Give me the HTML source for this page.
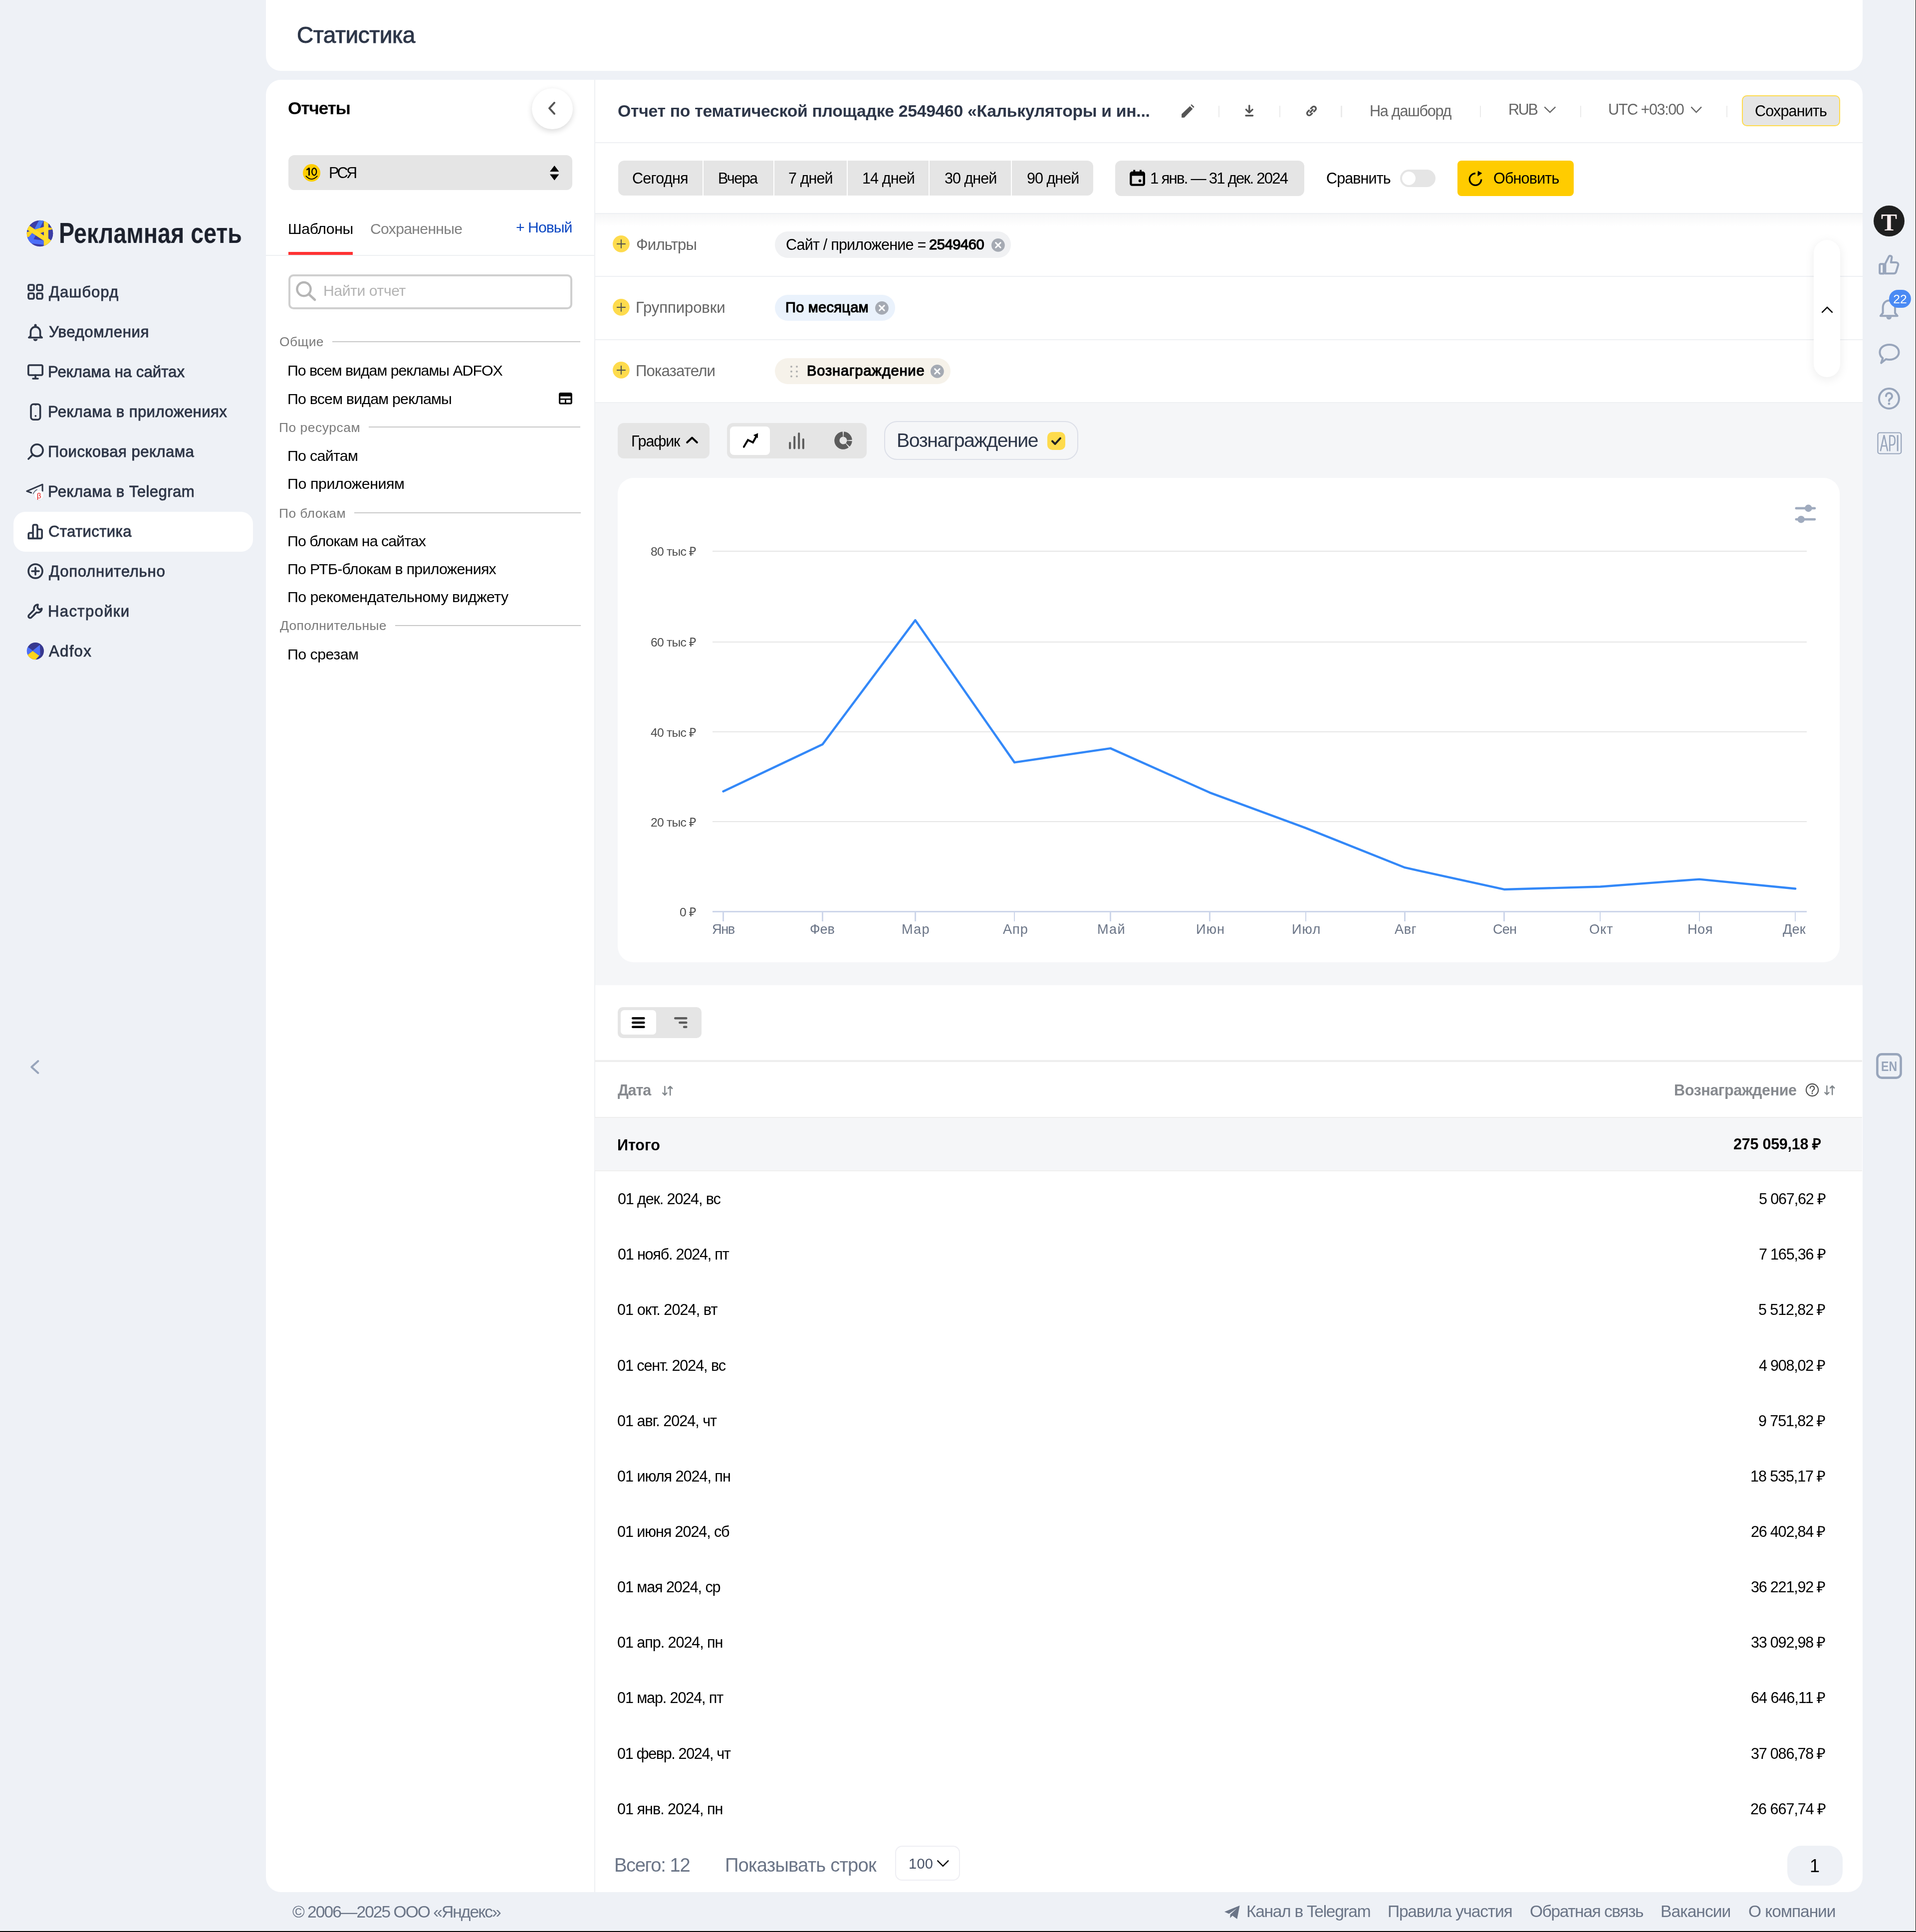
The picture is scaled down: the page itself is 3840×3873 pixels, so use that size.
<!DOCTYPE html><html lang="ru"><head><meta charset="utf-8"><title>Статистика</title><style>
html{zoom:2}
@media (max-width:2500px){html{zoom:1}}
*{margin:0;padding:0;box-sizing:border-box}
html,body{width:1920px;height:1936.5px;overflow:hidden;background:#eef1f6}
body{position:relative;font-family:"Liberation Sans",sans-serif}
.t{position:absolute;line-height:1;white-space:nowrap;will-change:transform}
.b{position:absolute}
svg.b{overflow:visible;will-change:transform}
</style></head><body>
<svg class="b" style="left:24.00px;top:218.00px;" width="32" height="32" viewBox="0 0 1916 1916"><defs><clipPath id="lc"><circle cx="957" cy="957" r="787"/></clipPath></defs>
<g clip-path="url(#lc)"><rect width="1916" height="1916" fill="#3b3da6"/>
<path d="M930 120 L1220 120 L850 840 L630 690Z" fill="#4a7cf6"/>
<path d="M490 930 L700 1080 L580 1300 L1190 1380 L1190 1640 L440 1560 L150 1250Z" fill="#4c6ff8"/>
<path d="M60 880 L330 820 L1190 560 L1800 640 L1800 750 L1465 760 L1190 870 L990 950 L490 930 L300 1160 L60 1200Z" fill="#ffd21c"/>
<path d="M60 304 L1800 1483 L1800 1789 L60 650Z" fill="#ffdc2a"/>
<path d="M1190 0 L1465 0 L1465 1916 L1190 1916Z" fill="#ffdd30"/>
<path d="M1465 760 L1800 690 L1800 1200 L1640 1375 L1465 1250Z" fill="#3b3da6"/>
<path d="M990 945 L1190 870 L1190 1075Z" fill="#3b3da6"/>
<path d="M1465 330 L1570 440 L1465 480Z" fill="#3b3da6"/>
<path d="M150 720 L330 820 L150 890Z" fill="#3b3da6"/>
</g></svg>
<div class="t" id="logo" style="left:58.98px;top:219.69px;font-size:28.60px;font-weight:700;color:#1c212d;transform:scaleX(0.8153);transform-origin:0 0;">Рекламная сеть</div>
<div class="b" style="left:13.40px;top:512.95px;width:240.00px;height:39.90px;background:#fff;border-radius:12px"></div>
<div class="t" id="nav0" style="left:49.00px;top:285.04px;font-size:15.60px;color:#2e3647;letter-spacing:0.465px;-webkit-text-stroke:0.4px #2e3647">Дашборд</div>
<div class="t" id="nav1" style="left:48.90px;top:325.04px;font-size:15.60px;color:#2e3647;letter-spacing:0.265px;-webkit-text-stroke:0.4px #2e3647">Уведомления</div>
<div class="t" id="nav2" style="left:47.90px;top:365.04px;font-size:15.60px;color:#2e3647;letter-spacing:-0.007px;-webkit-text-stroke:0.4px #2e3647">Реклама на сайтах</div>
<div class="t" id="nav3" style="left:47.90px;top:405.04px;font-size:15.60px;color:#2e3647;letter-spacing:0.182px;-webkit-text-stroke:0.4px #2e3647">Реклама в приложениях</div>
<div class="t" id="nav4" style="left:47.90px;top:445.04px;font-size:15.60px;color:#2e3647;letter-spacing:0.209px;-webkit-text-stroke:0.4px #2e3647">Поисковая реклама</div>
<div class="t" id="nav5" style="left:47.90px;top:485.04px;font-size:15.60px;color:#2e3647;letter-spacing:0.189px;-webkit-text-stroke:0.4px #2e3647">Реклама в Telegram</div>
<div class="t" id="nav6" style="left:48.40px;top:525.04px;font-size:15.60px;color:#2e3647;letter-spacing:0.153px;-webkit-text-stroke:0.4px #2e3647">Статистика</div>
<div class="t" id="nav7" style="left:48.90px;top:565.04px;font-size:15.60px;color:#2e3647;letter-spacing:0.345px;-webkit-text-stroke:0.4px #2e3647">Дополнительно</div>
<div class="t" id="nav8" style="left:47.90px;top:605.04px;font-size:15.60px;color:#2e3647;letter-spacing:0.644px;-webkit-text-stroke:0.4px #2e3647">Настройки</div>
<div class="t" id="nav9" style="left:48.90px;top:645.04px;font-size:15.60px;color:#2e3647;letter-spacing:0.630px;-webkit-text-stroke:0.4px #2e3647">Adfox</div>
<svg class="b" style="left:27.50px;top:284.35px;" width="16" height="16" viewBox="0 0 16 16"><g fill="none" stroke="#2e3647" stroke-width="1.8" stroke-linecap="round" stroke-linejoin="round"><rect x="1" y="1" width="5.5" height="5.5" rx="1.2"/><rect x="9.5" y="1" width="5.5" height="5.5" rx="1.2"/><rect x="1" y="9.5" width="5.5" height="5.5" rx="1.2"/><rect x="9.5" y="9.5" width="5.5" height="5.5" rx="1.2"/></g></svg>
<svg class="b" style="left:27.50px;top:324.35px;" width="16" height="16" viewBox="0 0 16 16"><g fill="none" stroke="#2e3647" stroke-width="1.8" stroke-linecap="round" stroke-linejoin="round"><path d="M3.2 12.3 V8.2 C3.2 5.2 5.3 3.2 8 3.2 C10.7 3.2 12.8 5.2 12.8 8.2 V12.3 L14.6 13.9 H1.4 Z"/></g><path d="M5.8 15.2 a2.2 2.2 0 0 0 4.4 0Z" fill="#2e3647"/><circle cx="8" cy="1.6" r="1.3" fill="#2e3647"/></svg>
<svg class="b" style="left:27.50px;top:364.35px;" width="16" height="16" viewBox="0 0 16 16"><g fill="none" stroke="#2e3647" stroke-width="1.8" stroke-linecap="round" stroke-linejoin="round"><rect x="0.9" y="1.5" width="14.2" height="10" rx="1.2"/><path d="M5.5 15 H10.5 M8 11.5 V15"/></g></svg>
<svg class="b" style="left:27.50px;top:404.35px;" width="16" height="16" viewBox="0 0 16 16"><g fill="none" stroke="#2e3647" stroke-width="1.8" stroke-linecap="round" stroke-linejoin="round"><rect x="3.5" y="0.6" width="9.3" height="15.5" rx="2.6"/></g><circle cx="8.15" cy="12.4" r="0.95" fill="#2e3647"/><path d="M6.6 1.2 Q8.15 2.6 9.7 1.2" fill="#2e3647"/></svg>
<svg class="b" style="left:27.50px;top:444.35px;" width="16" height="16" viewBox="0 0 16 16"><g fill="none" stroke="#2e3647" stroke-width="1.8" stroke-linecap="round" stroke-linejoin="round" stroke-width="2.2"><circle cx="9.6" cy="6.85" r="5.95"/><path d="M5.3 11.2 L1.0 15.5"/></g></svg>
<svg class="b" style="left:23.00px;top:478.00px;" width="25" height="25" viewBox="0 0 25 25"><path d="M8.35 15.9 L3.9 14.3 L19.57 7.6 L19.57 14.1" fill="none" stroke="#2e3647" stroke-width="1.5" stroke-linecap="round" stroke-linejoin="round"/><path d="M10.2 17.1 Q11.5 14 14.35 12.66" fill="none" stroke="#2e3647" stroke-width="0.6"/><circle cx="16.05" cy="18.27" r="4.9" fill="#fff" stroke="#dfe5ee" stroke-width="0.5"/><text x="16.1" y="21.3" font-size="7.6" text-anchor="middle" font-family="Liberation Sans" fill="#e01010">β</text></svg>
<svg class="b" style="left:27.50px;top:524.35px;" width="16" height="16" viewBox="0 0 16 16"><g fill="none" stroke="#2e3647" stroke-width="1.8" stroke-linecap="round" stroke-linejoin="round" stroke-width="1.85"><path d="M1.1 15.2 V10.8 a1.2 1.2 0 0 1 1.2 -1.2 H5.55 V2.7 a1.2 1.2 0 0 1 1.2 -1.2 H8.76 a1.2 1.2 0 0 1 1.2 1.2 V6.1 H13.35 a1.2 1.2 0 0 1 1.2 1.2 V14.0 a1.2 1.2 0 0 1 -1.2 1.2 Z M5.55 9.6 V15.2 M9.96 6.1 V15.2"/></g></svg>
<svg class="b" style="left:27.50px;top:564.35px;" width="16" height="16" viewBox="0 0 16 16"><g fill="none" stroke="#2e3647" stroke-width="1.8" stroke-linecap="round" stroke-linejoin="round" stroke-width="2"><circle cx="8" cy="8" r="7"/><path d="M8 4.5 V11.5 M4.5 8 H11.5"/></g></svg>
<svg class="b" style="left:27.50px;top:604.35px;" width="16" height="16" viewBox="0 0 16 16"><g fill="none" stroke="#2e3647" stroke-width="1.8" stroke-linecap="round" stroke-linejoin="round" stroke-width="2"><path d="M10.5 1.5 a4 4 0 0 0 -3.8 5.2 L1.5 12 a1.6 1.6 0 0 0 2.4 2.4 L9.2 9.3 a4 4 0 0 0 5.2 -3.8 l-2.4 1.1 -2-2 Z"/></g></svg>
<svg class="b" style="left:23.00px;top:638.00px;" width="25" height="25" viewBox="0 0 1916 1916"><defs><clipPath id="ac"><circle cx="955" cy="1115" r="655"/></clipPath></defs><g clip-path="url(#ac)"><rect width="1916" height="1916" fill="#37388f"/><path d="M380 800 L750 1080 L1300 640 L1330 1440 L1220 1460 L750 1110 L340 1430 L200 1000Z" fill="#4d70fa"/><path d="M750 1110 L1220 1460 L1270 1460 L950 1800 L200 1800 L200 1500 L340 1430Z" fill="#ffd51c"/></g></svg>
<svg class="b" style="left:30.00px;top:1062.00px;" width="10" height="15" viewBox="0 0 10 15"><path d="M8.2 1.5 L1.6 7.5 L8.2 13.5" fill="none" stroke="#98a5bb" stroke-width="2" stroke-linecap="round" stroke-linejoin="round"/></svg>
<div class="b" style="left:266.35px;top:0.00px;width:1600.15px;height:71.05px;background:#fff;border-radius:0 0 15px 15px"></div>
<div class="t" id="hdr" style="left:297.35px;top:23.63px;font-size:23.00px;color:#2d3648;letter-spacing:-0.239px;-webkit-text-stroke:0.5px #2d3648">Статистика</div>
<div class="b" style="left:266.35px;top:80.00px;width:1600.15px;height:1816.60px;background:#fff;border-radius:15px"></div>
<div class="b" style="left:595.50px;top:80.00px;width:1.00px;height:1816.60px;background:#eef0f3"></div>
<div class="t" id="otch" style="left:288.70px;top:100.18px;font-size:17.80px;font-weight:700;color:#000;letter-spacing:-0.690px;">Отчеты</div>
<div class="b" style="left:533.00px;top:88.30px;width:41.00px;height:41.00px;background:#fff;border-radius:50%;box-shadow:0 2px 6px rgba(0,0,0,0.15)"></div>
<svg class="b" style="left:548.50px;top:101.50px;" width="9" height="14" viewBox="0 0 9 14"><path d="M7 1.5 L2 7 L7 12.5" fill="none" stroke="#555" stroke-width="2" stroke-linecap="round" stroke-linejoin="round"/></svg>
<div class="b" style="left:289.20px;top:155.50px;width:284.20px;height:35.20px;background:#e5e5e5;border-radius:6px"></div>
<svg class="b" style="left:303.45px;top:164.45px;" width="17.55" height="17.55" viewBox="0 0 17.55 17.55"><circle cx="8.77" cy="8.77" r="8.77" fill="#ffcc00"/><path d="M6.25 3.75 V11.45" stroke="#000" stroke-width="1.45"/><path d="M3.7 5.9 L6.4 3.9" stroke="#000" stroke-width="1.2"/><ellipse cx="11.35" cy="7.6" rx="2.25" ry="3.55" fill="none" stroke="#000" stroke-width="1.15"/><path d="M3.2 12.1 Q8.75 18 14.35 12.1" fill="none" stroke="#000" stroke-width="0.95" stroke-linecap="round"/></svg>
<div class="t" id="rsya" style="left:329.50px;top:165.55px;font-size:15.30px;color:#000;letter-spacing:-1.789px;">РСЯ</div>
<svg class="b" style="left:550.80px;top:166.00px;" width="9.2" height="14.7" viewBox="0 0 9.2 14.7"><path d="M4.6 0 L9.2 6 H0Z M4.6 14.7 L9.2 8.7 H0Z" fill="#000"/></svg>
<div class="t" id="tab1" style="left:288.30px;top:222.22px;font-size:15.10px;color:#000;letter-spacing:-0.200px;">Шаблоны</div>
<div class="t" id="tab2" style="left:370.75px;top:222.22px;font-size:15.10px;color:#808080;letter-spacing:-0.356px;">Сохраненные</div>
<div class="t" id="tab3" style="left:517.00px;top:220.72px;font-size:15.10px;color:#0a47c2;letter-spacing:-0.478px;">+ Новый</div>
<div class="b" style="left:266.35px;top:255.60px;width:329.15px;height:1.00px;background:#eef0f3"></div>
<div class="b" style="left:289.00px;top:252.30px;width:64.50px;height:3.00px;background:#f33"></div>
<div class="b" style="left:289.00px;top:274.75px;width:284.50px;height:35.15px;border:2px solid #cfcfcf;border-radius:5px;background:#fff"></div>
<svg class="b" style="left:295.80px;top:281.50px;" width="21" height="20" viewBox="0 0 21 20"><circle cx="8.5" cy="8.3" r="6.8" fill="none" stroke="#b5b5b5" stroke-width="2.2"/><path d="M13.3 13.3 L19.5 19" stroke="#b5b5b5" stroke-width="2.4" stroke-linecap="round"/></svg>
<div class="t" id="srch" style="left:323.75px;top:284.22px;font-size:15.10px;color:#b3b3b3;letter-spacing:-0.225px;">Найти отчет</div>
<div class="t" id="sec0" style="left:279.85px;top:335.83px;font-size:13.20px;color:#7a7a7a;letter-spacing:0.213px;">Общие</div>
<div class="b" style="left:333.20px;top:342.00px;width:248.55px;height:1.00px;background:#c8c8c8"></div>
<div class="t" id="sec1" style="left:279.30px;top:421.83px;font-size:13.20px;color:#7a7a7a;letter-spacing:0.271px;">По ресурсам</div>
<div class="b" style="left:369.70px;top:427.50px;width:212.05px;height:1.00px;background:#c8c8c8"></div>
<div class="t" id="sec2" style="left:279.30px;top:507.83px;font-size:13.20px;color:#7a7a7a;letter-spacing:0.207px;">По блокам</div>
<div class="b" style="left:355.00px;top:513.50px;width:226.75px;height:1.00px;background:#c8c8c8"></div>
<div class="t" id="sec3" style="left:280.30px;top:620.33px;font-size:13.20px;color:#7a7a7a;letter-spacing:0.172px;">Дополнительные</div>
<div class="b" style="left:396.00px;top:626.50px;width:185.75px;height:1.00px;background:#c8c8c8"></div>
<div class="t" id="itm0" style="left:288.20px;top:363.63px;font-size:15.20px;color:#000;letter-spacing:-0.531px;">По всем видам рекламы ADFOX</div>
<div class="t" id="itm1" style="left:288.20px;top:391.88px;font-size:15.20px;color:#000;letter-spacing:-0.410px;">По всем видам рекламы</div>
<div class="t" id="itm2" style="left:288.20px;top:449.13px;font-size:15.20px;color:#000;letter-spacing:-0.365px;">По сайтам</div>
<div class="t" id="itm3" style="left:288.20px;top:477.13px;font-size:15.20px;color:#000;letter-spacing:-0.212px;">По приложениям</div>
<div class="t" id="itm4" style="left:288.20px;top:534.43px;font-size:15.20px;color:#000;letter-spacing:-0.480px;">По блокам на сайтах</div>
<div class="t" id="itm5" style="left:288.20px;top:562.38px;font-size:15.20px;color:#000;letter-spacing:-0.372px;">По РТБ-блокам в приложениях</div>
<div class="t" id="itm6" style="left:288.20px;top:590.63px;font-size:15.20px;color:#000;letter-spacing:-0.278px;">По рекомендательному виджету</div>
<div class="t" id="itm7" style="left:288.20px;top:648.13px;font-size:15.20px;color:#000;letter-spacing:-0.272px;">По срезам</div>
<svg class="b" style="left:560.00px;top:393.50px;" width="13.4" height="11.7" viewBox="0 0 13.4 11.7"><rect x="0.8" y="0.8" width="11.8" height="10.1" rx="1" fill="none" stroke="#000" stroke-width="1.6"/><rect x="0.8" y="0.8" width="11.8" height="3" fill="#000"/><path d="M0.8 6.6 H12.6 M6.7 6.6 V10.9" stroke="#000" stroke-width="1.4"/></svg>
<div class="t" id="title" style="left:618.80px;top:102.99px;font-size:16.90px;font-weight:700;color:#2d3648;letter-spacing:-0.168px;">Отчет по тематической площадке 2549460 «Калькуляторы и ин...</div>
<div class="b" style="left:596.50px;top:142.50px;width:1270.00px;height:1.00px;background:#eef0f3"></div>
<svg class="b" style="left:1183.00px;top:103.00px;" width="15" height="16" viewBox="0 0 15 16"><path d="M1.06 11.42 L9.4 3.33 L12.23 6.16 L3.73 14.9 L1.06 14.9Z" fill="#555"/><path d="M11.0 1.55 L13.84 4.14 L12.87 5.1 L10.2 2.36Z" fill="#555"/></svg>
<div class="b" style="left:1220.85px;top:105.90px;width:1.10px;height:11.40px;background:#ebebeb"></div>
<div class="b" style="left:1282.05px;top:105.90px;width:1.10px;height:11.40px;background:#ebebeb"></div>
<div class="b" style="left:1343.70px;top:105.90px;width:1.10px;height:11.40px;background:#ebebeb"></div>
<div class="b" style="left:1483.15px;top:105.90px;width:1.10px;height:11.40px;background:#ebebeb"></div>
<div class="b" style="left:1583.45px;top:105.90px;width:1.10px;height:11.40px;background:#ebebeb"></div>
<div class="b" style="left:1729.95px;top:105.90px;width:1.10px;height:11.40px;background:#ebebeb"></div>
<svg class="b" style="left:1246.00px;top:104.00px;" width="12" height="14" viewBox="0 0 12 14"><path d="M5.9 1.9 V8.6 M2.7 5.8 L5.9 8.9 L9.1 5.8 M2.5 11.9 H9.3" fill="none" stroke="#555" stroke-width="1.7" stroke-linecap="round" stroke-linejoin="round"/></svg>
<svg class="b" style="left:1307.00px;top:104.00px;" width="14.5" height="14.4" viewBox="0 0 14.5 14.4"><g fill="none" stroke="#555" stroke-width="1.35" stroke-linecap="round" transform="rotate(-45 7.25 7.2) translate(7.25 7.2) scale(1.25) translate(-7.25 -7.2)"><path d="M6.2 5.5 H4.6 a1.7 1.7 0 0 0 0 3.4 H6.2"/><path d="M8.3 5.5 H9.9 a1.7 1.7 0 0 1 0 3.4 H8.3"/><path d="M5.8 7.2 H8.7"/></g></svg>
<div class="t" id="dash" style="left:1372.50px;top:103.55px;font-size:15.30px;color:#666;letter-spacing:-0.632px;">На дашборд</div>
<div class="t" id="rub" style="left:1511.60px;top:102.05px;font-size:15.30px;color:#666;letter-spacing:-1.197px;">RUB</div>
<svg class="b" style="left:1547.20px;top:106.50px;" width="12.4" height="7" viewBox="0 0 12.4 7"><path d="M0.7 0.7 L6.2 6 L11.7 0.7" fill="none" stroke="#666" stroke-width="1.2"/></svg>
<div class="t" id="utc" style="left:1611.50px;top:102.05px;font-size:15.30px;color:#666;letter-spacing:-0.721px;">UTC +03:00</div>
<svg class="b" style="left:1693.75px;top:106.50px;" width="11.65" height="7" viewBox="0 0 11.65 7"><path d="M0.7 0.7 L5.8 6 L11 0.7" fill="none" stroke="#666" stroke-width="1.2"/></svg>
<div class="b" style="left:1745.60px;top:95.60px;width:98.50px;height:31.00px;background:#e5e5e5;border:1px solid #ffdb4d;border-radius:5px"></div>
<div class="t" id="save" style="left:1758.70px;top:103.55px;font-size:15.30px;color:#000;letter-spacing:-0.443px;">Сохранить</div>
<div class="b" style="left:619.30px;top:161.00px;width:476.10px;height:35.20px;background:#e5e5e5;border-radius:6px"></div>
<div class="b" style="left:703.80px;top:161.00px;width:1.00px;height:35.20px;background:#fff"></div>
<div class="b" style="left:774.80px;top:161.00px;width:1.00px;height:35.20px;background:#fff"></div>
<div class="b" style="left:848.50px;top:161.00px;width:1.00px;height:35.20px;background:#fff"></div>
<div class="b" style="left:930.50px;top:161.00px;width:1.00px;height:35.20px;background:#fff"></div>
<div class="b" style="left:1013.20px;top:161.00px;width:1.00px;height:35.20px;background:#fff"></div>
<div class="t" id="per0" style="left:633.40px;top:171.05px;font-size:15.30px;color:#000;letter-spacing:-0.382px;">Сегодня</div>
<div class="t" id="per1" style="left:719.25px;top:171.05px;font-size:15.30px;color:#000;letter-spacing:-0.782px;">Вчера</div>
<div class="t" id="per2" style="left:789.95px;top:171.05px;font-size:15.30px;color:#000;letter-spacing:-0.468px;">7 дней</div>
<div class="t" id="per3" style="left:864.10px;top:171.05px;font-size:15.30px;color:#000;letter-spacing:-0.458px;">14 дней</div>
<div class="t" id="per4" style="left:946.40px;top:171.05px;font-size:15.30px;color:#000;letter-spacing:-0.508px;">30 дней</div>
<div class="t" id="per5" style="left:1028.80px;top:171.05px;font-size:15.30px;color:#000;letter-spacing:-0.508px;">90 дней</div>
<div class="b" style="left:1117.50px;top:161.00px;width:189.50px;height:35.50px;background:#e5e5e5;border-radius:6px"></div>
<svg class="b" style="left:1131.90px;top:170.00px;" width="15.6" height="16.5" viewBox="0 0 15.6 16.5"><rect x="1.2" y="3" width="13.2" height="12.3" rx="1.3" fill="none" stroke="#000" stroke-width="2.2"/><rect x="1.2" y="3" width="13.2" height="3.2" fill="#000"/><rect x="3.6" y="0.3" width="2" height="3.5" fill="#000"/><rect x="10" y="0.3" width="2" height="3.5" fill="#000"/><circle cx="10.3" cy="11.2" r="1.4" fill="#000"/></svg>
<div class="t" id="date" style="left:1152.60px;top:170.94px;font-size:15.60px;color:#000;letter-spacing:-0.899px;">1 янв. — 31 дек. 2024</div>
<div class="t" id="cmp" style="left:1329.10px;top:171.20px;font-size:15.30px;color:#000;letter-spacing:-0.470px;">Сравнить</div>
<div class="b" style="left:1403.00px;top:170.00px;width:35.50px;height:17.40px;background:#e5e5e5;border-radius:9px"></div>
<div class="b" style="left:1404.90px;top:171.90px;width:13.60px;height:13.60px;background:#fff;border-radius:50%"></div>
<div class="b" style="left:1460.60px;top:161.00px;width:116.30px;height:35.30px;background:#ffcc00;border-radius:4px"></div>
<svg class="b" style="left:1471.00px;top:170.00px;" width="16" height="17" viewBox="0 0 16 17"><path d="M7.5 3.85 A5.9 5.9 0 1 0 13.4 9.75" fill="none" stroke="#000" stroke-width="1.6"/><path d="M9.9 1.2 L14.2 3.6 L9.7 6.8Z" fill="#000"/></svg>
<div class="t" id="upd" style="left:1496.35px;top:171.20px;font-size:15.30px;color:#000;letter-spacing:-0.435px;">Обновить</div>
<div class="b" style="left:596.50px;top:214.50px;width:1270.00px;height:12.50px;background:linear-gradient(rgba(20,30,50,0.04),rgba(20,30,50,0))"></div>
<div class="b" style="left:596.50px;top:213.50px;width:1270.00px;height:1.00px;background:#eef0f3"></div>
<svg class="b" style="left:614.00px;top:235.75px;" width="16.9" height="16.9" viewBox="0 0 16.9 16.9"><circle cx="8.45" cy="8.45" r="8.45" fill="#fedb4d"/><path d="M8.45 4.0 V12.9 M4.0 8.45 H12.9" stroke="#4d4d4d" stroke-width="1"/></svg>
<div class="t" id="frow0" style="left:637.40px;top:237.49px;font-size:15.60px;color:#666;letter-spacing:-0.431px;">Фильтры</div>
<svg class="b" style="left:614.00px;top:299.35px;" width="16.9" height="16.9" viewBox="0 0 16.9 16.9"><circle cx="8.45" cy="8.45" r="8.45" fill="#fedb4d"/><path d="M8.45 4.0 V12.9 M4.0 8.45 H12.9" stroke="#4d4d4d" stroke-width="1"/></svg>
<div class="t" id="frow1" style="left:636.90px;top:300.59px;font-size:15.60px;color:#666;letter-spacing:-0.081px;">Группировки</div>
<svg class="b" style="left:614.00px;top:362.55px;" width="16.9" height="16.9" viewBox="0 0 16.9 16.9"><circle cx="8.45" cy="8.45" r="8.45" fill="#fedb4d"/><path d="M8.45 4.0 V12.9 M4.0 8.45 H12.9" stroke="#4d4d4d" stroke-width="1"/></svg>
<div class="t" id="frow2" style="left:636.90px;top:364.19px;font-size:15.60px;color:#666;letter-spacing:-0.438px;">Показатели</div>
<div class="b" style="left:596.50px;top:276.50px;width:1270.00px;height:1.00px;background:#eef0f3"></div>
<div class="b" style="left:596.50px;top:340.20px;width:1270.00px;height:1.00px;background:#eef0f3"></div>
<div class="b" style="left:596.50px;top:403.00px;width:1270.00px;height:1.00px;background:#eef0f3"></div>
<div class="b" style="left:776.50px;top:232.20px;width:236.70px;height:26.30px;background:#f0f1f3;border-radius:13px"></div>
<div class="t" id="chip1a" style="left:787.50px;top:237.65px;font-size:15.30px;color:#000;letter-spacing:-0.421px;">Сайт / приложение =</div>
<div class="t" id="chip1b" style="left:931.10px;top:238.24px;font-size:14.60px;color:#000;letter-spacing:-0.233px;-webkit-text-stroke:0.6px #000">2549460</div>
<svg class="b" style="left:993.45px;top:238.95px;" width="13.4" height="13.4" viewBox="0 0 13.4 13.4"><circle cx="6.7" cy="6.7" r="6.7" fill="#a5aab3"/><path d="M4.3 4.3 L9.1 9.1 M9.1 4.3 L4.3 9.1" stroke="#fff" stroke-width="1.5" stroke-linecap="round"/></svg>
<div class="b" style="left:776.50px;top:295.60px;width:120.40px;height:26.00px;background:#eaf2fc;border-radius:13px"></div>
<div class="t" id="chip2" style="left:787.00px;top:301.24px;font-size:14.60px;color:#000;letter-spacing:0.091px;-webkit-text-stroke:0.6px #000">По месяцам</div>
<svg class="b" style="left:876.80px;top:302.10px;" width="13.4" height="13.4" viewBox="0 0 13.4 13.4"><circle cx="6.7" cy="6.7" r="6.7" fill="#a5aab3"/><path d="M4.3 4.3 L9.1 9.1 M9.1 4.3 L4.3 9.1" stroke="#fff" stroke-width="1.5" stroke-linecap="round"/></svg>
<div class="b" style="left:776.50px;top:358.75px;width:175.90px;height:26.25px;background:#f6f2ea;border-radius:13px"></div>
<svg class="b" style="left:792.00px;top:366.50px;" width="8" height="12" viewBox="0 0 8 12"><g fill="#b0b0b0"><circle cx="1" cy="1" r="1"/><circle cx="6.5" cy="1" r="1"/><circle cx="1" cy="5.9" r="1"/><circle cx="6.5" cy="5.9" r="1"/><circle cx="1" cy="10.8" r="1"/><circle cx="6.5" cy="10.8" r="1"/></g></svg>
<div class="t" id="chip3" style="left:808.30px;top:364.44px;font-size:14.60px;color:#000;letter-spacing:0.384px;-webkit-text-stroke:0.6px #000">Вознаграждение</div>
<svg class="b" style="left:932.50px;top:365.40px;" width="13.4" height="13.4" viewBox="0 0 13.4 13.4"><circle cx="6.7" cy="6.7" r="6.7" fill="#a5aab3"/><path d="M4.3 4.3 L9.1 9.1 M9.1 4.3 L4.3 9.1" stroke="#fff" stroke-width="1.5" stroke-linecap="round"/></svg>
<div class="b" style="left:1817.40px;top:240.50px;width:26.50px;height:137.50px;background:#fff;border-radius:14px;box-shadow:0 2px 10px rgba(0,0,0,0.08)"></div>
<svg class="b" style="left:1824.80px;top:307.00px;" width="12" height="7" viewBox="0 0 12 7"><path d="M0.7 6.3 L6 1 L11.3 6.3" fill="none" stroke="#000" stroke-width="1.3"/></svg>
<div class="b" style="left:596.50px;top:404.00px;width:1270.00px;height:583.40px;background:#f5f6f8"></div>
<div class="b" style="left:619.00px;top:424.00px;width:92.00px;height:35.50px;background:#e5e5e5;border-radius:6px"></div>
<div class="t" id="graf" style="left:632.70px;top:434.35px;font-size:15.30px;color:#000;letter-spacing:-0.614px;">График</div>
<svg class="b" style="left:687.00px;top:437.00px;" width="12" height="8" viewBox="0 0 12 8"><path d="M1.5 6.5 L6.5 1.75 L11.5 6.5" fill="none" stroke="#000" stroke-width="1.9" stroke-linecap="round" stroke-linejoin="round"/></svg>
<div class="b" style="left:728.40px;top:424.00px;width:140.10px;height:35.50px;background:#e5e5e5;border-radius:6px"></div>
<div class="b" style="left:731.50px;top:427.40px;width:40.00px;height:28.40px;background:#fff;border-radius:4px"></div>
<svg class="b" style="left:744.00px;top:433.00px;" width="17" height="17" viewBox="0 0 17 17"><path d="M1.4 14.9 L5.5 8 L10.5 10.5 L13.8 4.5" fill="none" stroke="#000" stroke-width="1.9" stroke-linecap="round" stroke-linejoin="miter"/><path d="M10.9 3.1 L15.6 1.1 L15.4 6.3Z" fill="#000"/></svg>
<svg class="b" style="left:789.00px;top:432.00px;" width="18" height="20" viewBox="0 0 18 20"><g stroke="#5c5c5c" stroke-width="2" stroke-linecap="round"><path d="M2.6 11.85 V17.2"/><path d="M7.1 6.05 V17.2"/><path d="M11.6 2.45 V17.2"/><path d="M15.95 8.35 V17.2"/></g></svg>
<svg class="b" style="left:835.90px;top:432.70px;" width="18" height="18" viewBox="0 0 18 18"><path d="M9.62 0.12 A8.9 8.9 0 0 1 17.88 8.38 L12.74 8.74 A3.75 3.75 0 0 0 9.26 5.26Z M17.88 9.62 A8.9 8.9 0 0 1 15.40 15.18 L11.70 11.60 A3.75 3.75 0 0 0 12.74 9.26Z M14.48 16.01 A8.9 8.9 0 1 1 8.38 0.12 L8.74 5.26 A3.75 3.75 0 1 0 11.31 11.96Z" fill="#5c5c5c"/></svg>
<div class="b" style="left:886.00px;top:422.00px;width:194.40px;height:39.00px;background:#fff0;border:1px solid #dcdfe8;border-radius:13px"></div>
<div class="t" id="metric" style="left:898.50px;top:431.31px;font-size:19.60px;color:#2d3648;letter-spacing:-0.707px;">Вознаграждение</div>
<div class="b" style="left:1049.40px;top:433.00px;width:18.10px;height:18.00px;background:#fedb4d;border-radius:5px"></div>
<svg class="b" style="left:1052.00px;top:436.00px;" width="13" height="12" viewBox="0 0 13 12"><path d="M2.5 6.2 L5.3 9 L10.5 3.3" fill="none" stroke="#222" stroke-width="2" stroke-linecap="round" stroke-linejoin="round"/></svg>
<div class="b" style="left:619.20px;top:479.20px;width:1224.20px;height:485.30px;background:#fff;border-radius:16px"></div>
<svg class="b" style="left:1797.75px;top:505.75px;" width="22" height="19" viewBox="0 0 22 19"><g stroke="#a0abbe" stroke-width="2.3" stroke-linecap="round"><path d="M1.9 3.45 H20.5"/><path d="M1.9 14.55 H20.5"/></g><circle cx="14.15" cy="3.45" r="3.65" fill="#a0abbe"/><circle cx="6.85" cy="14.6" r="3.65" fill="#a0abbe"/></svg>
<div class="b" style="left:714.10px;top:551.75px;width:1096.60px;height:1.20px;background:#e6e6e6"></div>
<div class="b" style="left:714.10px;top:642.75px;width:1096.60px;height:1.20px;background:#e6e6e6"></div>
<div class="b" style="left:714.10px;top:732.90px;width:1096.60px;height:1.20px;background:#e6e6e6"></div>
<div class="b" style="left:714.10px;top:822.90px;width:1096.60px;height:1.20px;background:#e6e6e6"></div>
<div class="b" style="left:714.10px;top:913.00px;width:1096.60px;height:1.30px;background:#cdd6ea"></div>
<div class="t" id="yl0" style="left:651.80px;top:547.15px;font-size:12.40px;color:#4d4d4d;letter-spacing:-0.417px;">80 тыс ₽</div>
<div class="t" id="yl1" style="right:1223.07px;top:638.15px;font-size:12.40px;color:#4d4d4d;letter-spacing:-0.417px;">60 тыс ₽</div>
<div class="t" id="yl2" style="right:1223.07px;top:728.30px;font-size:12.40px;color:#4d4d4d;letter-spacing:-0.417px;">40 тыс ₽</div>
<div class="t" id="yl3" style="right:1223.07px;top:818.30px;font-size:12.40px;color:#4d4d4d;letter-spacing:-0.417px;">20 тыс ₽</div>
<div class="t" id="yl4" style="left:680.95px;top:908.45px;font-size:12.40px;color:#4d4d4d;letter-spacing:-0.470px;">0 ₽</div>
<div class="b" style="left:724.15px;top:914.00px;width:1.20px;height:9.50px;background:#cdd6ea"></div>
<div class="t" id="mon0" style="left:713.35px;top:924.49px;font-size:13.60px;color:#6b7587;letter-spacing:-0.737px;">Янв</div>
<div class="b" style="left:823.57px;top:914.00px;width:1.20px;height:9.50px;background:#cdd6ea"></div>
<div class="t" id="mon1" style="left:811.70px;top:924.49px;font-size:13.60px;color:#6b7587;letter-spacing:-0.097px;">Фев</div>
<div class="b" style="left:916.57px;top:914.00px;width:1.20px;height:9.50px;background:#cdd6ea"></div>
<div class="t" id="mon2" style="left:903.60px;top:924.49px;font-size:13.60px;color:#6b7587;letter-spacing:0.582px;">Мар</div>
<div class="b" style="left:1015.99px;top:914.00px;width:1.20px;height:9.50px;background:#cdd6ea"></div>
<div class="t" id="mon3" style="left:1005.00px;top:924.49px;font-size:13.60px;color:#6b7587;letter-spacing:0.486px;">Апр</div>
<div class="b" style="left:1112.20px;top:914.00px;width:1.20px;height:9.50px;background:#cdd6ea"></div>
<div class="t" id="mon4" style="left:1099.30px;top:924.49px;font-size:13.60px;color:#6b7587;letter-spacing:0.582px;">Май</div>
<div class="b" style="left:1211.61px;top:914.00px;width:1.20px;height:9.50px;background:#cdd6ea"></div>
<div class="t" id="mon5" style="left:1198.30px;top:924.49px;font-size:13.60px;color:#6b7587;letter-spacing:0.542px;">Июн</div>
<div class="b" style="left:1307.82px;top:914.00px;width:1.20px;height:9.50px;background:#cdd6ea"></div>
<div class="t" id="mon6" style="left:1294.60px;top:924.49px;font-size:13.60px;color:#6b7587;letter-spacing:0.517px;">Июл</div>
<div class="b" style="left:1407.24px;top:914.00px;width:1.20px;height:9.50px;background:#cdd6ea"></div>
<div class="t" id="mon7" style="left:1397.50px;top:924.49px;font-size:13.60px;color:#6b7587;letter-spacing:0.306px;">Авг</div>
<div class="b" style="left:1506.66px;top:914.00px;width:1.20px;height:9.50px;background:#cdd6ea"></div>
<div class="t" id="mon8" style="left:1496.00px;top:924.49px;font-size:13.60px;color:#6b7587;letter-spacing:-0.439px;">Сен</div>
<div class="b" style="left:1602.87px;top:914.00px;width:1.20px;height:9.50px;background:#cdd6ea"></div>
<div class="t" id="mon9" style="left:1592.30px;top:924.49px;font-size:13.60px;color:#6b7587;letter-spacing:0.413px;">Окт</div>
<div class="b" style="left:1702.29px;top:914.00px;width:1.20px;height:9.50px;background:#cdd6ea"></div>
<div class="t" id="mon10" style="left:1691.15px;top:924.49px;font-size:13.60px;color:#6b7587;letter-spacing:0.236px;">Ноя</div>
<div class="b" style="left:1798.50px;top:914.00px;width:1.20px;height:9.50px;background:#cdd6ea"></div>
<div class="t" id="mon11" style="left:1786.65px;top:924.49px;font-size:13.60px;color:#6b7587;letter-spacing:0.042px;">Дек</div>
<svg class="b" style="left:600.00px;top:540.00px;" width="1220" height="400" viewBox="0 0 1220 400"><polyline points="124.75,253.21 224.17,206.16 317.17,81.69 416.59,224.19 512.80,210.06 612.21,254.41 708.42,289.94 807.84,329.61 907.26,351.48 1003.47,348.75 1102.88,341.29 1199.10,350.76" fill="none" stroke="#3388f8" stroke-width="2.2" stroke-linejoin="round" stroke-linecap="round"/></svg>
<div class="b" style="left:618.95px;top:1009.45px;width:84.05px;height:31.00px;background:#e5e5e5;border-radius:5px"></div>
<div class="b" style="left:621.95px;top:1012.45px;width:35.55px;height:24.55px;background:#fff;border-radius:3.5px"></div>
<svg class="b" style="left:632.00px;top:1018.00px;" width="16" height="14" viewBox="0 0 16 14"><g stroke="#000" stroke-width="2.2" stroke-linecap="round"><path d="M2.1 2.6 H13.25 M2.1 7 H13.25 M2.1 11.4 H13.25"/></g></svg>
<svg class="b" style="left:674.00px;top:1018.00px;" width="16" height="14" viewBox="0 0 16 14"><g stroke="#5c5c5c" stroke-width="2.2" stroke-linecap="round"><path d="M2.6 2.6 H13.7 M7.15 7 H13.7 M11.5 11.4 H13.7"/></g></svg>
<div class="b" style="left:596.00px;top:1062.40px;width:1270.00px;height:2.00px;background:#eeeeee"></div>
<div class="t" id="thd" style="left:619.10px;top:1084.85px;font-size:15.30px;font-weight:700;color:#878a8f;letter-spacing:-0.599px;">Дата</div>
<svg class="b" style="left:663.00px;top:1088.00px;" width="11" height="11" viewBox="0 0 11 11"><g fill="none" stroke="#80868b" stroke-width="1.25" stroke-linecap="round" stroke-linejoin="round"><path d="M3.2 1 V9.6 M1.2 7.6 L3.2 9.6 L5.2 7.6"/><path d="M8.6 9.6 V1 M6.6 3 L8.6 1 L10.6 3"/></g></svg>
<div class="t" id="thv" style="left:1677.50px;top:1084.85px;font-size:15.30px;font-weight:700;color:#878a8f;letter-spacing:-0.228px;">Вознаграждение</div>
<svg class="b" style="left:1809.20px;top:1085.40px;" width="14" height="14" viewBox="0 0 14 14"><circle cx="7" cy="7" r="6.05" fill="none" stroke="#4d4d4d" stroke-width="1.05"/><path d="M4.9 5.3 a2.1 2.1 0 1 1 3.0 1.9 c-0.6 0.35 -0.9 0.75 -0.9 1.6" fill="none" stroke="#4d4d4d" stroke-width="1.05" stroke-linecap="round"/><circle cx="7" cy="10.5" r="0.7" fill="#4d4d4d"/></svg>
<svg class="b" style="left:1827.50px;top:1087.50px;" width="11" height="11" viewBox="0 0 11 11"><g fill="none" stroke="#80868b" stroke-width="1.25" stroke-linecap="round" stroke-linejoin="round"><path d="M3.2 1 V9.6 M1.2 7.6 L3.2 9.6 L5.2 7.6"/><path d="M8.6 9.6 V1 M6.6 3 L8.6 1 L10.6 3"/></g></svg>
<div class="b" style="left:596.00px;top:1119.60px;width:1270.00px;height:1.00px;background:#eeeeee"></div>
<div class="b" style="left:596.00px;top:1120.60px;width:1270.00px;height:52.90px;background:#f5f6f8"></div>
<div class="b" style="left:596.00px;top:1173.00px;width:1270.00px;height:1.00px;background:#efefef"></div>
<div class="t" id="itogo" style="left:618.40px;top:1140.05px;font-size:15.30px;font-weight:700;color:#000;letter-spacing:-0.049px;">Итого</div>
<div class="t" id="itogov" style="left:1736.75px;top:1138.90px;font-size:15.30px;font-weight:700;color:#000;letter-spacing:-0.142px;">275 059,18 ₽</div>
<div class="t" id="d0" style="left:618.80px;top:1194.05px;font-size:15.30px;color:#000;letter-spacing:-0.578px;">01 дек. 2024, вс</div>
<div class="t" id="v0" style="left:1762.30px;top:1194.05px;font-size:15.30px;color:#000;letter-spacing:-0.588px;">5 067,62 ₽</div>
<div class="t" id="d1" style="left:618.80px;top:1249.63px;font-size:15.30px;color:#000;letter-spacing:-0.608px;">01 нояб. 2024, пт</div>
<div class="t" id="v1" style="left:1762.30px;top:1249.63px;font-size:15.30px;color:#000;letter-spacing:-0.610px;">7 165,36 ₽</div>
<div class="t" id="d2" style="left:618.60px;top:1305.20px;font-size:15.30px;color:#000;letter-spacing:-0.471px;">01 окт. 2024, вт</div>
<div class="t" id="v2" style="left:1761.85px;top:1305.20px;font-size:15.30px;color:#000;letter-spacing:-0.566px;">5 512,82 ₽</div>
<div class="t" id="d3" style="left:618.60px;top:1360.78px;font-size:15.30px;color:#000;letter-spacing:-0.551px;">01 сент. 2024, вс</div>
<div class="t" id="v3" style="left:1762.35px;top:1360.78px;font-size:15.30px;color:#000;letter-spacing:-0.622px;">4 908,02 ₽</div>
<div class="t" id="d4" style="left:618.60px;top:1416.36px;font-size:15.30px;color:#000;letter-spacing:-0.504px;">01 авг. 2024, чт</div>
<div class="t" id="v4" style="left:1761.85px;top:1416.36px;font-size:15.30px;color:#000;letter-spacing:-0.566px;">9 751,82 ₽</div>
<div class="t" id="d5" style="left:618.35px;top:1471.93px;font-size:15.30px;color:#000;letter-spacing:-0.518px;">01 июля 2024, пн</div>
<div class="t" id="v5" style="left:1753.90px;top:1471.93px;font-size:15.30px;color:#000;letter-spacing:-0.565px;">18 535,17 ₽</div>
<div class="t" id="d6" style="left:618.35px;top:1527.51px;font-size:15.30px;color:#000;letter-spacing:-0.559px;">01 июня 2024, сб</div>
<div class="t" id="v6" style="left:1754.40px;top:1527.51px;font-size:15.30px;color:#000;letter-spacing:-0.615px;">26 402,84 ₽</div>
<div class="t" id="d7" style="left:618.35px;top:1583.09px;font-size:15.30px;color:#000;letter-spacing:-0.550px;">01 мая 2024, ср</div>
<div class="t" id="v7" style="left:1754.40px;top:1583.09px;font-size:15.30px;color:#000;letter-spacing:-0.615px;">36 221,92 ₽</div>
<div class="t" id="d8" style="left:618.35px;top:1638.67px;font-size:15.30px;color:#000;letter-spacing:-0.538px;">01 апр. 2024, пн</div>
<div class="t" id="v8" style="left:1754.40px;top:1638.67px;font-size:15.30px;color:#000;letter-spacing:-0.615px;">33 092,98 ₽</div>
<div class="t" id="d9" style="left:618.35px;top:1694.24px;font-size:15.30px;color:#000;letter-spacing:-0.564px;">01 мар. 2024, пт</div>
<div class="t" id="v9" style="left:1754.40px;top:1694.24px;font-size:15.30px;color:#000;letter-spacing:-0.502px;">64 646,11 ₽</div>
<div class="t" id="d10" style="left:618.35px;top:1749.82px;font-size:15.30px;color:#000;letter-spacing:-0.690px;">01 февр. 2024, чт</div>
<div class="t" id="v10" style="left:1754.40px;top:1749.82px;font-size:15.30px;color:#000;letter-spacing:-0.615px;">37 086,78 ₽</div>
<div class="t" id="d11" style="left:618.35px;top:1805.40px;font-size:15.30px;color:#000;letter-spacing:-0.509px;">01 янв. 2024, пн</div>
<div class="t" id="v11" style="left:1753.75px;top:1805.40px;font-size:15.30px;color:#000;letter-spacing:-0.515px;">26 667,74 ₽</div>
<div class="t" id="tot" style="left:615.65px;top:1859.93px;font-size:19.10px;color:#6b7587;letter-spacing:-0.699px;">Всего: 12</div>
<div class="t" id="show" style="left:726.35px;top:1859.93px;font-size:19.10px;color:#6b7587;letter-spacing:-0.414px;">Показывать строк</div>
<div class="b" style="left:896.90px;top:1850.20px;width:65.10px;height:34.90px;border:1px solid #eeeef3;border-radius:7px;background:#fff"></div>
<div class="t" id="hund" style="left:910.60px;top:1861.23px;font-size:14.50px;color:#4a5468;letter-spacing:0.136px;">100</div>
<svg class="b" style="left:938.30px;top:1864.20px;" width="13" height="8" viewBox="0 0 13 8"><path d="M0.8 0.8 L6.4 6.4 L12 0.8" fill="none" stroke="#000" stroke-width="1.2"/></svg>
<div class="b" style="left:1791.10px;top:1849.90px;width:55.20px;height:40.20px;background:#eef1f6;border-radius:14px"></div>
<div class="t" id="pg" style="left:1818.70px;transform:translateX(-50%);top:1861.26px;font-size:18.00px;color:#000;">1</div>
<div class="t" id="copy" style="left:293.00px;top:1907.98px;font-size:16.80px;color:#6b7587;letter-spacing:-0.992px;">© 2006—2025 ООО «Яндекс»</div>
<svg class="b" style="left:1226.30px;top:1909.30px;" width="16.5" height="14.5" viewBox="0 0 16.5 14.5"><path d="M0.5 6.8 L15.8 0.5 L13.2 14 L8.5 10.6 L6.2 13 L6.3 9.5 L13 3.3 L5 8.7 Z" fill="#6b7587"/></svg>
<div class="t" id="lnk0" style="left:1249.00px;top:1907.68px;font-size:16.80px;color:#6b7587;letter-spacing:-0.666px;">Канал в Telegram</div>
<div class="t" id="lnk1" style="left:1390.65px;top:1907.68px;font-size:16.80px;color:#6b7587;letter-spacing:-0.609px;">Правила участия</div>
<div class="t" id="lnk2" style="left:1532.80px;top:1907.68px;font-size:16.80px;color:#6b7587;letter-spacing:-0.727px;">Обратная связь</div>
<div class="t" id="lnk3" style="left:1664.20px;top:1907.68px;font-size:16.80px;color:#6b7587;letter-spacing:-0.476px;">Вакансии</div>
<div class="t" id="lnk4" style="left:1751.90px;top:1907.68px;font-size:16.80px;color:#6b7587;letter-spacing:-0.535px;">О компании</div>
<div class="b" style="left:1877.50px;top:206.00px;width:31.20px;height:31.20px;background:#1f1f1f;border-radius:50%"></div>
<div class="t" style="left:1893.10px;transform:translateX(-50%);top:210.88px;font-size:24.00px;font-weight:700;color:#fbeeee;font-family:'Liberation Serif',serif">T</div>
<svg class="b" style="left:1882.90px;top:255.20px;" width="22" height="22" viewBox="0 0 22 22"><path d="M6.2 9.3 L9.8 2.2 a1.6 1.6 0 0 1 2.9 1.2 L11.9 8 H17 a2.2 2.2 0 0 1 2.1 2.8 l-2 6.5 a2.5 2.5 0 0 1 -2.4 1.8 H6.2 Z M1.6 9.6 h3 v9.7 h-3 a1 1 0 0 1 -1 -1 v-7.7 a1 1 0 0 1 1 -1Z" fill="none" stroke="#98a5bb" stroke-width="2" stroke-linejoin="round"/></svg>
<svg class="b" style="left:1882.00px;top:298.00px;" width="22" height="24" viewBox="0 0 22 24"><path d="M4.8 15.7 V10.2 C4.8 6.2 7.5 3.2 10.9 3.2 C14.3 3.2 17 6.2 17 10.2 V15.7 L19.4 18.6 H2.4 Z" fill="none" stroke="#98a5bb" stroke-width="2" stroke-linejoin="round"/><path d="M8.2 19.6 a2.7 2.7 0 0 0 5.4 0 Z" fill="#98a5bb"/></svg>
<div class="b" style="left:1893.20px;top:290.50px;width:21.80px;height:17.90px;background:#4a8af4;border-radius:9px"></div>
<div class="t" id="badge" style="left:1904.10px;transform:translateX(-50%);top:293.80px;font-size:12.40px;color:#fff;">22</div>
<svg class="b" style="left:1882.50px;top:344.00px;" width="21.5" height="21.5" viewBox="0 0 21.5 21.5"><path d="M10.8 1.5 C16.5 1.5 20.3 4.8 20.3 9 C20.3 13.2 16.5 16.5 10.8 16.5 C9.6 16.5 8.5 16.3 7.4 16 L2.6 19.8 L4.2 15 C2.2 13.6 1.2 11.4 1.2 9 C1.2 4.8 5 1.5 10.8 1.5Z" fill="none" stroke="#98a5bb" stroke-width="2" stroke-linejoin="round"/></svg>
<svg class="b" style="left:1882.00px;top:388.30px;" width="22" height="22" viewBox="0 0 22 22"><circle cx="11" cy="11" r="10" fill="none" stroke="#98a5bb" stroke-width="2"/><path d="M8 8.5 a3 3 0 1 1 4.3 2.7 c-0.9 0.5 -1.3 1 -1.3 2.2" fill="none" stroke="#98a5bb" stroke-width="2" stroke-linecap="round"/><circle cx="11" cy="16.2" r="1.2" fill="#98a5bb"/></svg>
<svg class="b" style="left:1880.85px;top:432.75px;" width="24.4" height="22" viewBox="0 0 24.4 22"><rect x="0.75" y="0.75" width="23.4" height="21" rx="2" fill="none" stroke="#98a5bb" stroke-width="1.1"/><g fill="none" stroke="#98a5bb" stroke-width="1.3"><path d="M3.4 19.2 L7.0 3.1 L10.6 19.2 M4.6 14.0 H9.4"/><path d="M12.7 19.2 V3.8 H15.1 C17.1 3.8 17.9 5.6 17.9 8.45 C17.9 11.3 17.1 13.0 15.1 13.0 H12.7"/><path d="M20.6 3.1 V19.2" stroke-width="1.45"/></g></svg>
<svg class="b" style="left:1880.00px;top:1055.70px;" width="26" height="26" viewBox="0 0 26 26"><rect x="1.2" y="1.2" width="23.6" height="23.6" rx="4.5" fill="none" stroke="#98a5bb" stroke-width="2.3"/><text x="13.05" y="18.1" font-size="13.9" font-weight="700" text-anchor="middle" font-family="Liberation Sans" fill="#98a5bb" textLength="16.1" lengthAdjust="spacingAndGlyphs">EN</text></svg>
<div class="b" style="left:1919.00px;top:0.00px;width:1.00px;height:1936.50px;background:#fff"></div>
<div class="b" style="left:1919.50px;top:0.00px;width:0.50px;height:1936.50px;background:#000"></div>
<div class="b" style="left:0.00px;top:1935.00px;width:1920.00px;height:0.50px;background:#fff"></div>
<div class="b" style="left:0.00px;top:1935.50px;width:1920.00px;height:1.00px;background:#000"></div>
</body></html>
